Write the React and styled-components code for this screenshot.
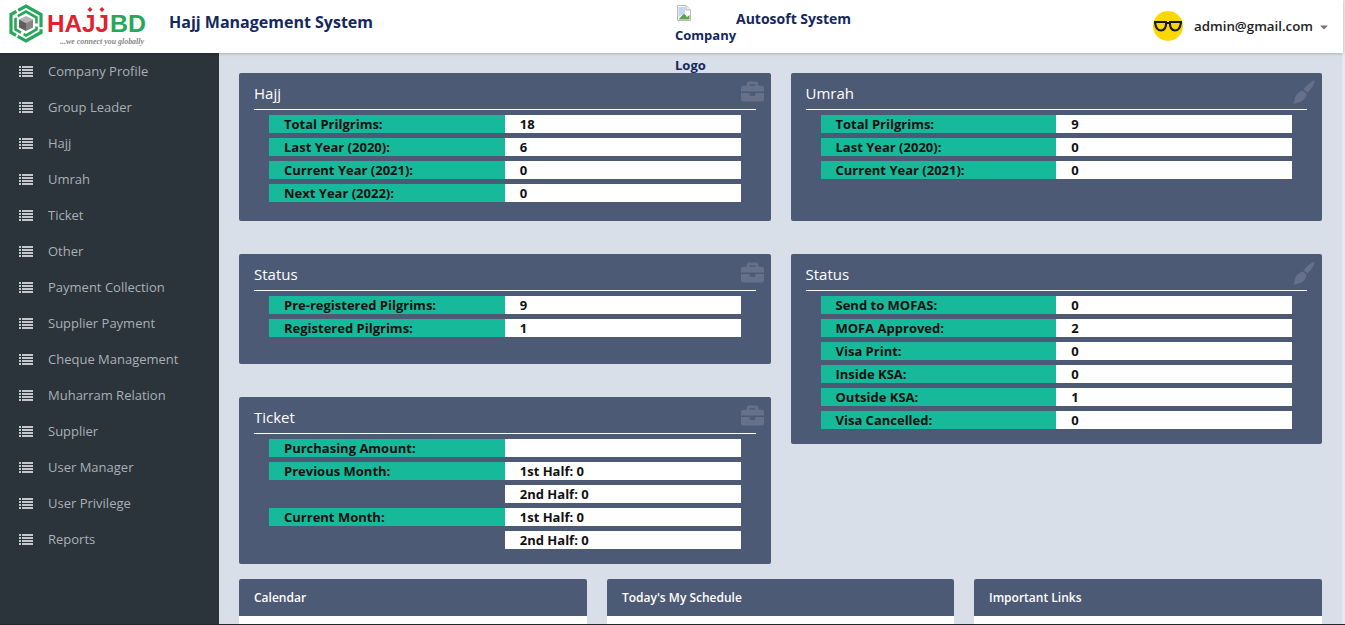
import React from "react";
import styled, { createGlobalStyle } from "styled-components";
import { FaBriefcase, FaCaretDown } from "react-icons/fa";

const GlobalStyle = createGlobalStyle`
  html, body {
    margin: 0;
    height: 100%;
    overflow: hidden;
    background: #e4e9ef;
    font-family: "Open Sans", "Liberation Sans", sans-serif;
  }
`;

const Page = styled.div`
  width: 1345px;
  height: 625px;
  box-sizing: border-box;
  border-bottom: 1px solid #23282c;
  overflow: hidden;
  display: flex;
  flex-direction: column;
`;

const Header = styled.header`
  height: 53px;
  width: 1343px;
  flex: none;
  background: #fff;
  box-shadow: 0 1px 3px rgba(0, 0, 0, 0.2);
  display: flex;
  position: relative;
  z-index: 2;
  color: #14285f;
  font-weight: 700;
`;

const Brand = styled.div`
  width: 169px;
  padding: 3px 0 0 8px;
  box-sizing: border-box;
`;

const SystemName = styled.h1`
  width: 506px;
  margin: 12px 0 0;
  font-size: 16px;
  line-height: 20px;
  font-weight: 700;
`;

const CompanyBlock = styled.div`
  width: 478px;
  display: flex;
  font-size: 13px;
  line-height: 30px;
`;

const BrokenLogo = styled.div`
  width: 61px;
  padding-top: 5px;
  svg {
    display: block;
    margin: 0 0 -1px 1px;
  }
  span {
    display: block;
    white-space: pre-line;
  }
`;

const CompanyName = styled.div`
  font-size: 14px;
  line-height: 20px;
  margin-top: 9px;
`;

const UserMenu = styled.div`
  display: flex;
  align-items: center;
  height: 51px;
  color: #222;
  font-size: 13.3px;
  font-weight: 600;
  svg.caret {
    margin-left: 5px;
    margin-top: 3px;
    color: #777;
    font-size: 12px;
  }
`;

const Avatar = styled.div`
  width: 30px;
  height: 30px;
  margin-right: 11px;
  border-radius: 50%;
  background: #fdd800;
  display: flex;
  align-items: center;
  justify-content: center;
`;

const Body = styled.div`
  flex: 1;
  display: flex;
  min-height: 0;
`;

const Sidebar = styled.nav`
  width: 219px;
  flex: none;
  background: #2b333b;
`;

const NavItem = styled.a`
  height: 36px;
  padding-left: 19px;
  display: flex;
  align-items: center;
  color: #a9b0b6;
  font-size: 13px;
  svg {
    margin-right: 15px;
    color: #c4c8cc;
  }
`;

const Main = styled.main`
  flex: 1;
  padding: 20px 20px 0;
  min-width: 0;
  background: #d8dfe8;
  margin-right: 3px;
`;

const Columns = styled.div`
  display: grid;
  grid-template-columns: 531.5px 531.5px;
  column-gap: 20px;
`;

const Column = styled.div`
  display: flex;
  flex-direction: column;
  gap: 33px;
`;

const Card = styled.section`
  position: relative;
  min-height: ${(p) => p.$minHeight || 0}px;
  box-sizing: border-box;
  padding: 0 15px 15px;
  background: #4d5a75;
  border-radius: 2px;
`;

const CardTitle = styled.h2`
  margin: 0 0 5px;
  height: 36px;
  line-height: 41px;
  font-size: 15px;
  font-weight: 400;
  color: #fff;
  border-bottom: 1px solid #fff;
`;

const CardIcon = styled.div`
  position: absolute;
  top: 7px;
  right: 7px;
  color: #667089;
  font-size: 23px;
  line-height: 0;
`;

const Rows = styled.div`
  padding: 0 15px;
  display: flex;
  flex-direction: column;
  gap: 5px;
`;

const Row = styled.div`
  display: grid;
  grid-template-columns: 1fr 1fr;
  height: 18px;
  font-size: 13px;
  font-weight: 700;
  line-height: 18px;
  color: #111;
`;

const Label = styled.div`
  padding-left: 15px;
  background: ${(p) => (p.$empty ? "transparent" : "#17b99b")};
`;

const Value = styled.div`
  padding-left: 15px;
  background: #fff;
`;

const BottomRow = styled.div`
  display: grid;
  grid-template-columns: 348px 347px 348px;
  column-gap: 20px;
  margin-top: 15px;
`;

const MiniCard = styled.section`
  background: #fff;
  border-radius: 2px 2px 0 0;
  height: 60px;
`;

const MiniTitle = styled.h3`
  margin: 0;
  height: 37px;
  padding-left: 15px;
  line-height: 37px;
  font-size: 12px;
  font-weight: 600;
  color: #fff;
  background: #4d5a75;
  border-radius: 2px 2px 0 0;
`;

const menu = [
  "Company Profile",
  "Group Leader",
  "Hajj",
  "Umrah",
  "Ticket",
  "Other",
  "Payment Collection",
  "Supplier Payment",
  "Cheque Management",
  "Muharram Relation",
  "Supplier",
  "User Manager",
  "User Privilege",
  "Reports",
];

const Logo = () => (
  <svg width="140" height="48" viewBox="0 0 140 48">
    <path
      d="M18 3 L33 11.5 V29.5 L18 38 L3 29.5 V11.5 Z"
      fill="none"
      stroke="#27a75a"
      strokeWidth="3.2"
      strokeDasharray="30 2"
    />
    <path
      d="M18 8.5 L28.5 14.5 V26.5 L18 32.5 L7.5 26.5 V14.5 Z"
      fill="none"
      stroke="#27a75a"
      strokeWidth="2.6"
      strokeDasharray="18 3"
    />
    <path d="M18 13 L25 16.5 L18 20 L11 16.5 Z" fill="#b4b4b4" />
    <path d="M11 16.5 L18 20 V28 L11 24.5 Z" fill="#5f5f5f" />
    <path d="M25 16.5 L18 20 V28 L25 24.5 Z" fill="#858585" />
    <text
      x="39"
      y="29"
      fontFamily="Liberation Sans"
      fontWeight="700"
      fontSize="24"
      fill="#e0222e"
      textLength="62"
      lengthAdjust="spacingAndGlyphs"
    >
      HAJJ
    </text>
    <text
      x="102"
      y="29"
      fontFamily="Liberation Sans"
      fontWeight="700"
      fontSize="24"
      fill="#27a75a"
      textLength="36"
      lengthAdjust="spacingAndGlyphs"
    >
      BD
    </text>
    <path d="M94 4 l2.5 2.5 -2.5 2.5 -2.5 -2.5Z M82 4 l2.5 2.5 -2.5 2.5 -2.5 -2.5Z" fill="#e0222e" />
    <text
      x="52"
      y="41"
      fontFamily="Liberation Serif"
      fontStyle="italic"
      fontSize="8"
      fill="#888"
      textLength="84"
      lengthAdjust="spacingAndGlyphs"
    >
      ...we connect you globally
    </text>
  </svg>
);

const BrokenImage = () => (
  <svg width="16" height="16" viewBox="0 0 16 16">
    <path d="M1.5 .5 H10 L14.5 5 V15.5 H1.5 Z" fill="#fff" stroke="#b9b9b9" />
    <path d="M10 .5 V5 H14.5" fill="#eee" stroke="#b9b9b9" />
    <path d="M2.5 2 H9 V8 L2.5 12 Z" fill="#c5d6f2" />
    <path d="M2.5 14.5 L8 8.5 L11 12 L13.5 10 V14.5 Z" fill="#5aa64a" />
  </svg>
);

const Glasses = () => (
  <svg width="28" height="12" viewBox="0 0 28 12">
    <path
      d="M1 2 H12 C12.5 7 10.5 10.5 7 10.5 C3.5 10.5 1.5 7 1 2 Z M16 2 H27 C26.5 7 24.5 10.5 21 10.5 C17.5 10.5 15.5 7 16 2 Z M12 3 H16"
      fill="none"
      stroke="#1a1a1a"
      strokeWidth="2.2"
    />
  </svg>
);

// four short bullets with long bars, tighter than the icon packs' list glyphs
const ListIcon = () => (
  <svg width="14" height="11" viewBox="0 0 14 11" fill="currentColor">
    <path d="M0 0h2v2H0zM3 0h11v2H3zM0 3h2v2H0zM3 3h11v2H3zM0 6h2v2H0zM3 6h11v2H3zM0 9h2v2H0zM3 9h11v2H3z" />
  </svg>
);

const BrushIcon = () => (
  <svg width="23" height="24" viewBox="0 0 23 24" fill="currentColor">
    <path d="M22.5 .5 C23 3 20 8 15.5 12.5 L11.5 9.5 C15 5 19.5 1 22.5 .5 Z" />
    <path d="M10.5 10.5 L14.5 13.5 C14.5 18 10 23.5 1 23.5 C3.5 21.5 2 19 4 15.5 C5.5 13 8 11.5 10.5 10.5 Z" />
  </svg>
);

const InfoCard = ({ title, Icon, rows, minHeight }) => (
  <Card $minHeight={minHeight}>
    <CardTitle>{title}</CardTitle>
    <CardIcon>
      <Icon />
    </CardIcon>
    <Rows>
      {rows.map(([label, value], i) => (
        <Row key={i}>
          <Label $empty={!label}>{label}</Label>
          <Value>{value}</Value>
        </Row>
      ))}
    </Rows>
  </Card>
);

export default function App() {
  return (
    <Page>
      <GlobalStyle />
      <Header>
        <Brand>
          <Logo />
        </Brand>
        <SystemName>Hajj Management System</SystemName>
        <CompanyBlock>
          <BrokenLogo>
            <BrokenImage />
            <span>{"Company\nLogo"}</span>
          </BrokenLogo>
          <CompanyName>Autosoft System</CompanyName>
        </CompanyBlock>
        <UserMenu>
          <Avatar>
            <Glasses />
          </Avatar>
          admin@gmail.com
          <FaCaretDown className="caret" />
        </UserMenu>
      </Header>
      <Body>
        <Sidebar>
          {menu.map((item) => (
            <NavItem key={item}>
              <ListIcon />
              {item}
            </NavItem>
          ))}
        </Sidebar>
        <Main>
          <Columns>
            <Column>
              <InfoCard
                title="Hajj"
                Icon={FaBriefcase}
                minHeight={148}
                rows={[
                  ["Total Prilgrims:", "18"],
                  ["Last Year (2020):", "6"],
                  ["Current Year (2021):", "0"],
                  ["Next Year (2022):", "0"],
                ]}
              />
              <InfoCard
                title="Status"
                Icon={FaBriefcase}
                minHeight={110}
                rows={[
                  ["Pre-registered Pilgrims:", "9"],
                  ["Registered Pilgrims:", "1"],
                ]}
              />
              <InfoCard
                title="Ticket"
                Icon={FaBriefcase}
                rows={[
                  ["Purchasing Amount:", ""],
                  ["Previous Month:", "1st Half: 0"],
                  ["", "2nd Half: 0"],
                  ["Current Month:", "1st Half: 0"],
                  ["", "2nd Half: 0"],
                ]}
              />
            </Column>
            <Column>
              <InfoCard
                title="Umrah"
                Icon={BrushIcon}
                minHeight={148}
                rows={[
                  ["Total Prilgrims:", "9"],
                  ["Last Year (2020):", "0"],
                  ["Current Year (2021):", "0"],
                ]}
              />
              <InfoCard
                title="Status"
                Icon={BrushIcon}
                rows={[
                  ["Send to MOFAS:", "0"],
                  ["MOFA Approved:", "2"],
                  ["Visa Print:", "0"],
                  ["Inside KSA:", "0"],
                  ["Outside KSA:", "1"],
                  ["Visa Cancelled:", "0"],
                ]}
              />
            </Column>
          </Columns>
          <BottomRow>
            <MiniCard>
              <MiniTitle>Calendar</MiniTitle>
            </MiniCard>
            <MiniCard>
              <MiniTitle>Today's My Schedule</MiniTitle>
            </MiniCard>
            <MiniCard>
              <MiniTitle>Important Links</MiniTitle>
            </MiniCard>
          </BottomRow>
        </Main>
      </Body>
    </Page>
  );
}
